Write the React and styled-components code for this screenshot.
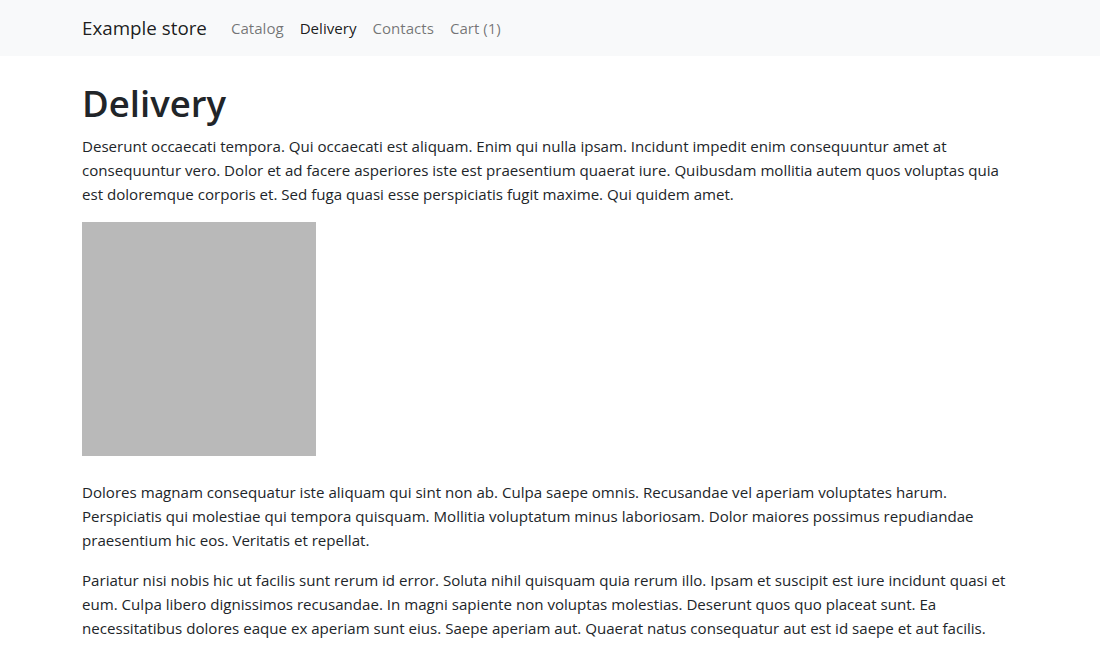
import React from "react"
import styled, { createGlobalStyle } from "styled-components"

const GlobalStyle = createGlobalStyle`
  * { box-sizing: border-box; }
  body {
    margin: 0;
    font-family: "Open Sans", "Noto Sans", Arial, sans-serif;
    font-size: 15.1px;
    line-height: 24px;
    color: #212529;
    background: #fff;
  }
`

const links = [
  { label: "Catalog" },
  { label: "Delivery", active: true },
  { label: "Contacts" },
  { label: "Cart (1)" },
]

const App = () => (
  <>
    <GlobalStyle />
    <Navbar>
      <Container className="nav-inner">
        <Brand href="#">Example store</Brand>
        <NavList>
          {links.map((l) => (
            <NavLink key={l.label} href="#" $active={l.active}>
              {l.label}
            </NavLink>
          ))}
        </NavList>
      </Container>
    </Navbar>
    <Main>
      <Title>Delivery</Title>
      <Text>
        Deserunt occaecati tempora. Qui occaecati est aliquam. Enim qui nulla
        ipsam. Incidunt impedit enim consequuntur amet at consequuntur vero.
        Dolor et ad facere asperiores iste est praesentium quaerat iure.
        Quibusdam mollitia autem quos voluptas quia est doloremque corporis et.
        Sed fuga quasi esse perspiciatis fugit maxime. Qui quidem amet.
      </Text>
      <Picture />
      <Text>
        Dolores magnam consequatur iste aliquam qui sint non ab. Culpa saepe
        omnis. Recusandae vel aperiam voluptates harum. Perspiciatis qui
        molestiae qui tempora quisquam. Mollitia voluptatum minus laboriosam.
        Dolor maiores possimus repudiandae praesentium hic eos. Veritatis et
        repellat.
      </Text>
      <Text>
        Pariatur nisi nobis hic ut facilis sunt rerum id error. Soluta nihil
        quisquam quia rerum illo. Ipsam et suscipit est iure incidunt quasi et
        eum. Culpa libero dignissimos recusandae. In magni sapiente non
        voluptas molestias. Deserunt quos quo placeat sunt. Ea necessitatibus
        dolores eaque ex aperiam sunt eius. Saepe aperiam aut. Quaerat natus
        consequatur aut est id saepe et aut facilis.
      </Text>
    </Main>
  </>
)

const Container = styled.div`
  width: 100%;
  max-width: 960px;
  margin: 0 auto;
  padding: 0 12px;
`

const Navbar = styled.nav`
  background-color: #f8f9fa;
  padding: 8px 0;

  .nav-inner {
    display: flex;
    align-items: center;
  }
`

const Brand = styled.a`
  font-size: 18.8px;
  line-height: 30px;
  padding: 5px 0;
  margin-right: 16px;
  color: rgba(0, 0, 0, 0.9);
  text-decoration: none;
`

const NavList = styled.div`
  display: flex;
`

const NavLink = styled.a`
  padding: 8px;
  line-height: 24px;
  color: ${(p) => (p.$active ? "rgba(0, 0, 0, 0.9)" : "rgba(0, 0, 0, 0.55)")};
  text-decoration: none;
`

const Main = styled(Container)`
  padding-top: 24px;
`

const Title = styled.h1`
  margin: 0 0 8px;
  font-size: 36.5px;
  font-weight: 600;
  line-height: 46px;
`

const Text = styled.p`
  margin: 0 0 16px;
`

const Picture = styled.div`
  width: 234px;
  height: 234px;
  background: #b9b9b9;
  margin-bottom: 24px;
`

export default App
